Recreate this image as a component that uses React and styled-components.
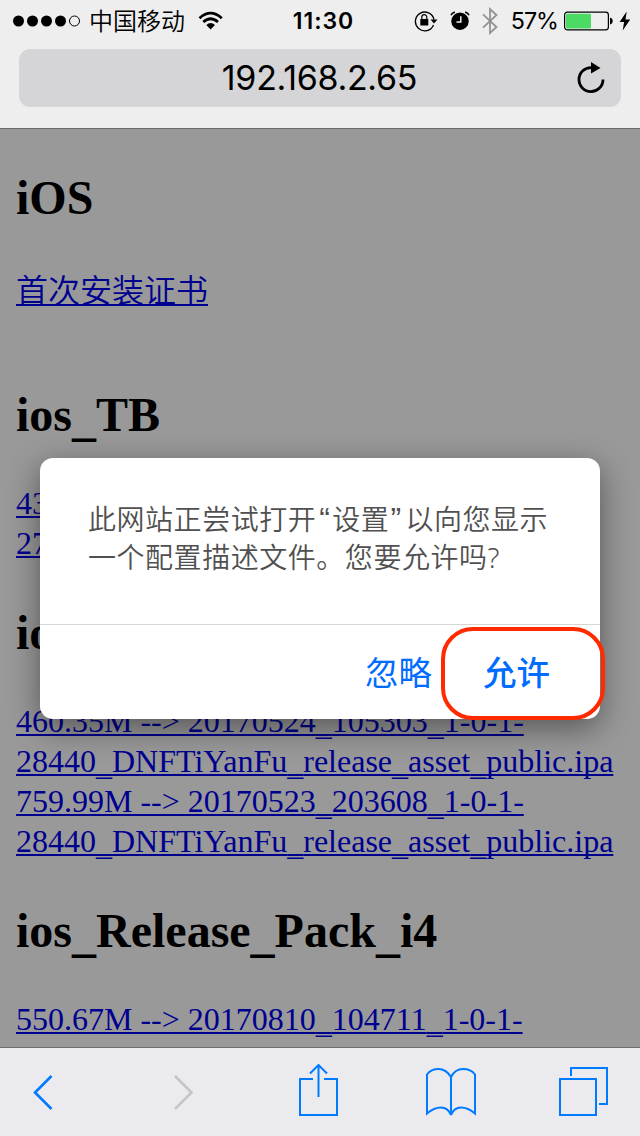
import React from "react";
import styled, { createGlobalStyle } from "styled-components";

const GlobalStyle = createGlobalStyle`
  * { box-sizing: border-box; }
  body { margin: 0; background: #999; }
`;

const sans = `Inter, "Noto Sans CJK SC", sans-serif`;

const Screen = styled.div`
  position: relative;
  width: 640px;
  height: 1136px;
  overflow: hidden;
  display: flex;
  flex-direction: column;
  font-family: ${sans};
  color: #000;
`;

const TopChrome = styled.header`
  height: 129px;
  flex: none;
  background: #eeeeee;
  border-bottom: 1px solid #6b6b6b;
`;

const StatusBar = styled.div`
  height: 49px;
  display: grid;
  grid-template-columns: 1fr auto 1fr;
  align-items: start;
  padding: 0 9px 0 13px;
`;

const StatusGroup = styled.div`
  display: flex;
  align-items: center;
  height: 41px;
  justify-content: ${(p) => (p.$end ? "flex-end" : "flex-start")};
`;

const StatusIcons = styled.div`
  display: flex;
  align-items: center;
  gap: 12px;
`;

const BatteryGroup = styled.div`
  display: flex;
  align-items: center;
  gap: 6px;
`;

const Carrier = styled.span`
  font: 350 24px/40px "Noto Sans CJK SC", sans-serif;
  margin: 0 13px 2px 8px;
`;

const Clock = styled.span`
  font-size: 23px;
  font-weight: 600;
  line-height: 42px;
  letter-spacing: 1px;
  margin-right: -3px;
`;

const Percent = styled.span`
  font-size: 23.3px;
  line-height: 40px;
  letter-spacing: -1px;
  margin: 0 6px 0 12px;
`;

const AddressBar = styled.div`
  height: 58px;
  margin: 0 19px;
  padding: 0 16px 0 43px;
  border-radius: 11px;
  background: #d5d5d7;
  display: flex;
  align-items: center;
`;

const Address = styled.span`
  flex: 1;
  text-align: center;
  font-size: 34px;
  font-weight: 400;
  line-height: 57px;
  margin-bottom: 1px;
  letter-spacing: -0.3px;
`;

const Page = styled.main`
  flex: 1;
  min-height: 0;
  overflow: hidden;
  padding: 0 16px;
  background: #999;
  font-family: "Liberation Serif", "Noto Sans CJK SC", serif;
`;

const Heading = styled.h2`
  margin: ${(p) => p.$top}px 0 ${(p) => p.$bottom || 40}px;
  font-size: 48px;
  line-height: 56px;
  font-weight: 700;
`;

const PageLink = styled.a`
  display: block;
  height: 40px;
  font-size: 32px;
  font-weight: ${(p) => (p.$light ? 350 : 400)};
  line-height: 40px;
  white-space: nowrap;
  color: #00008f;
  text-decoration: underline;
  text-decoration-thickness: 2px;
  text-underline-offset: 2px;
  text-decoration-skip-ink: none;
`;

const LowUnderscore = styled.span`
  vertical-align: -0.08em;
  line-height: 0;
`;

const Toolbar = styled.footer`
  height: 89px;
  flex: none;
  border-top: 1px solid #6d6d6f;
  background: #ebebef;
  display: grid;
  grid-template-columns: 142px 126px 127px 133px 50px;
  align-items: center;
  padding: 0 31px;
`;

const Dialog = styled.section`
  position: absolute;
  left: 40px;
  top: 458px;
  width: 560px;
  height: 261px;
  border-radius: 13px;
  background: #fff;
  box-shadow: 0 9px 32px rgba(0, 0, 0, 0.44);
  display: flex;
  flex-direction: column;
`;

const Message = styled.p`
  margin: 0;
  height: 167px;
  padding: 42px 0 0 48px;
  border-bottom: 1px solid #d5d7d6;
  font: 350 28px/38px "Noto Sans", "Noto Sans CJK SC", sans-serif;
  letter-spacing: 0.54px;
  color: #505050;
  white-space: nowrap;
`;

const Quote = styled.span`
  display: inline-block;
  width: 16px;
  font-size: 32px;
  line-height: 28px;
  font-family: "Liberation Sans", sans-serif;
  text-indent: ${(p) => (p.$open ? 3 : 1)}px;
`;

const Actions = styled.div`
  flex: 1;
  display: flex;
  justify-content: flex-end;
  align-items: center;
  padding: 0 50px 3px 0;
  gap: 51px;
`;

const ActionButton = styled.button`
  position: relative;
  padding: 0;
  border: 0;
  background: none;
  color: #006cff;
  font: ${(p) => (p.$strong ? 500 : 400)} 33.5px/50px "Noto Sans CJK SC", sans-serif;
`;

const Ring = styled.span`
  position: absolute;
  left: -42px;
  top: -19px;
  width: 164px;
  height: 93px;
  border: 4px solid #ff2a00;
  border-radius: 32px;
`;

const SignalDots = () => (
  <svg width="68" height="14" viewBox="0 0 68 14">
    {[5.5, 19.5, 33.5, 47.5].map((x) => <circle key={x} cx={x} cy="7" r="5.5" />)}
    <circle cx="61.5" cy="7" r="5" fill="none" stroke="#000" />
  </svg>
);

const WifiIcon = () => (
  <svg width="26" height="20" viewBox="0 0 26 20">
    <g fill="none" stroke="#000" strokeWidth="2.7">
      <path d="M1.5 7.2Q12.5-2.8 23.8 7.2" />
      <path d="M5.3 11.1Q12.6 4.4 20 11.1" />
    </g>
    <path d="M8.3 14Q12.6 10.2 17 14L12.6 18.5Z" />
  </svg>
);

const LockIcon = () => (
  <svg width="24" height="22" viewBox="0 0 24 22">
    <path d="M19.5 15A9.4 9.4 0 1 1 20 9.5" fill="none" stroke="#000" strokeWidth="1.3" />
    <path d="M16.5 9.5h7L20 13.4Z" />
    <rect x="6.3" y="9" width="8" height="6.5" rx=".5" />
    <path d="M7.8 9V7.2a2.5 2.5 0 0 1 5 0V9" fill="none" stroke="#000" strokeWidth="1.2" />
  </svg>
);

const AlarmIcon = () => (
  <svg width="20" height="20" viewBox="0 0 20 20">
    <circle cx="10" cy="10.2" r="8.7" />
    <path d="M10.8 5.2v5.7H6.5" fill="none" stroke="#eee" strokeWidth="1.5" />
    <path d="M1 4.2Q2.2 1.4 5 1.2M15 1.2Q17.8 1.4 19 4.2" fill="none" stroke="#000" strokeWidth="1.4" />
  </svg>
);

const BluetoothIcon = () => (
  <svg width="17" height="28" viewBox="0 0 17 28">
    <path d="M1 7.3 14.5 20 8 26V2l6.5 6L1 20.7" fill="none" stroke="#929292" strokeWidth="1.8" />
  </svg>
);

const BatteryIcon = () => (
  <svg width="49" height="20" viewBox="0 0 49 20">
    <rect x=".6" y="1.1" width="43.8" height="17.8" rx="2.8" fill="none" stroke="#000" strokeWidth="1.2" />
    <rect x="2" y="2.7" width="25" height="14.8" rx="1" fill="#4cd964" />
    <path d="M46 6.7q2.7.4 2.7 3.3t-2.7 3.4Z" />
  </svg>
);

const BoltIcon = () => (
  <svg width="12" height="20" viewBox="0 0 12 20">
    <path d="M7.7.5.6 11h4.5L3.7 19.4 11.2 8.5H6.5Z" />
  </svg>
);

const ReloadIcon = () => (
  <svg width="28" height="32" viewBox="0 0 28 32">
    <path d="M14.5 5.6A12 12 0 1 0 26 17.5" fill="none" stroke="#000" strokeWidth="2.8" />
    <path d="M14 0v11.5L23.5 6Z" />
  </svg>
);

const ToolIcon = ({ width, color = "#007aff", children }) => (
  <svg width={width} height="56" viewBox={`0 0 ${width} 56`} fill="none" stroke={color} strokeWidth="2">
    {children}
  </svg>
);

const FileName = ({ text }) =>
  text.split("_").map((part, i) => (
    <React.Fragment key={i}>
      {i > 0 && <LowUnderscore>_</LowUnderscore>}
      {part}
    </React.Fragment>
  ));

const olderBuilds = [
  "460.35M --> 20170524_105303_1-0-1-",
  "28440_DNFTiYanFu_release_asset_public.ipa",
  "759.99M --> 20170523_203608_1-0-1-",
  "28440_DNFTiYanFu_release_asset_public.ipa",
];

export default function App() {
  return (
    <Screen>
      <GlobalStyle />
      <TopChrome>
        <StatusBar>
          <StatusGroup>
            <SignalDots />
            <Carrier>中国移动</Carrier>
            <WifiIcon />
          </StatusGroup>
          <Clock>11:30</Clock>
          <StatusGroup $end>
            <StatusIcons>
              <LockIcon />
              <AlarmIcon />
              <BluetoothIcon />
            </StatusIcons>
            <Percent>57%</Percent>
            <BatteryGroup>
              <BatteryIcon />
              <BoltIcon />
            </BatteryGroup>
          </StatusGroup>
        </StatusBar>
        <AddressBar>
          <Address>192.168.2.65</Address>
          <ReloadIcon />
        </AddressBar>
      </TopChrome>

      <Page>
        <Heading $top={41} $bottom={45}>iOS</Heading>
        <PageLink $light>首次安装证书</PageLink>
        <Heading $top={76}><FileName text="ios_TB" /></Heading>
        <PageLink>43</PageLink>
        <PageLink>27</PageLink>
        <Heading $top={42}>ios</Heading>
        {olderBuilds.map((line, i) => (
          <PageLink key={i}><FileName text={line} /></PageLink>
        ))}
        <Heading $top={42}><FileName text="ios_Release_Pack_i4" /></Heading>
        <PageLink><FileName text="550.67M --> 20170810_104711_1-0-1-" /></PageLink>
      </Page>

      <Toolbar>
        <ToolIcon width={22}>
          <path d="M20.5 12 4 28.5 20.5 45" strokeWidth="2.6" />
        </ToolIcon>
        <ToolIcon width={22} color="#c5c5c8">
          <path d="M2 12 18.5 28.5 2 45" strokeWidth="2.6" />
        </ToolIcon>
        <ToolIcon width={40}>
          <path d="M14 15H1v36h37V15H25M19.5 33V1M11 9.5 19.5 1 28 9.5" />
        </ToolIcon>
        <ToolIcon width={50}>
          <path d="M25 51Q22 43.5 15 43.5T1 49.5V10.5Q5 5 12.5 5T25 13Q29 5 37 5T49 10.5V49.5Q42 43.5 35 43.5T25 51V13" />
        </ToolIcon>
        <ToolIcon width={50}>
          <path d="M1 15h36v36H1ZM12 12V4h36v36h-8" />
        </ToolIcon>
      </Toolbar>

      <Dialog>
        <Message>
          此网站正尝试打开<Quote $open>“</Quote>设置<Quote>”</Quote>以向您显示
          <br />
          一个配置描述文件。您要允许吗?
        </Message>
        <Actions>
          <ActionButton>忽略</ActionButton>
          <ActionButton $strong>
            允许
            <Ring />
          </ActionButton>
        </Actions>
      </Dialog>
    </Screen>
  );
}
